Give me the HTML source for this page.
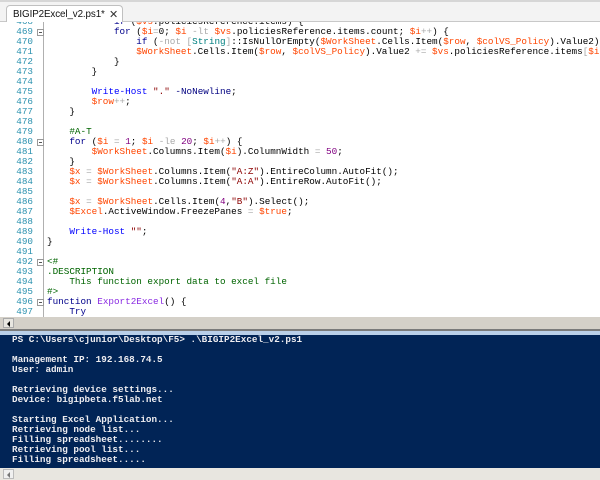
<!DOCTYPE html>
<html><head><meta charset="utf-8"><style>
*{margin:0;padding:0;box-sizing:border-box}
body{width:600px;height:480px;overflow:hidden;background:#fff;position:relative;font-family:"Liberation Mono",monospace}
.top{position:absolute;left:0;top:0;width:600px;height:22px;background:#f3f3f3;border-top:2px solid #d6d6d6;border-bottom:1px solid #c8c8c8}
.tab{position:absolute;left:6px;top:5px;width:117px;height:18px;background:#fff;border:1px solid #c0c0c0;border-bottom:none;border-radius:4px 4px 0 0;font:9.8px "Liberation Sans",sans-serif;letter-spacing:-0.1px;color:#111;padding:3px 0 0 6px;white-space:nowrap}
.tab span{position:absolute;left:102px;top:2px;font-size:11px;color:#333}
.ed{position:absolute;left:0;top:22px;width:600px;height:295px;overflow:hidden;background:#fff}
.rows{position:absolute;left:0;top:-5px}
.r{height:10px;line-height:10px;font-size:9.3px;white-space:pre;position:relative}
.n{position:absolute;left:0;width:33px;text-align:right;color:#2b91af}
.c{position:absolute;left:47px;color:#000}
.g{position:absolute;left:43px;top:0;width:1px;height:300px;background:#b0b0b0}
.f{position:absolute;left:37px;width:7px;height:7px;border:1px solid #999;background:#fff}
.f:after{content:"";position:absolute;left:1px;top:2px;width:3px;height:1px;background:#555}
.v{color:#ff4500}.k{color:#00008b}.cm{color:#0000ff}.s{color:#8b0000}.co{color:#006400}.nu{color:#800080}.o{color:#a9a9a9}.t{color:#008080}.p{color:#000080}.fn{color:#8a2be2}
.sb{position:absolute;left:0;top:317px;width:600px;height:12px;background:#d4d0c8}
.sb i{position:absolute;left:3px;top:1px;width:11px;height:10px;background:#e8e6e0;border:1px solid #aaa}
.sb i:after{content:"";position:absolute;left:3px;top:2px;border:3px solid transparent;border-right:3px solid #000;border-left:0}
.ln1{position:absolute;left:0;top:329px;width:600px;height:2px;background:#7a7a7a}
.ln2{position:absolute;left:0;top:331px;width:600px;height:4px;background:#b9cfe8}
.con{position:absolute;left:0;top:335px;width:600px;height:133px;background:#012456;color:#eeedf0;font-size:9.3px;font-weight:bold}
.con div{height:10px;line-height:10px;white-space:pre;padding-left:12px}
.sb2{position:absolute;left:0;top:468px;width:600px;height:12px;background:#e8e6e0}
.sb2 i{position:absolute;left:3px;top:1px;width:11px;height:10px;background:#f0f0f0;border:1px solid #bbb}
.sb2 i:after{content:"";position:absolute;left:3px;top:2px;border:3px solid transparent;border-right:3px solid #777;border-left:0}
</style></head><body>
<div class="top"></div>
<div class="tab">BIGIP2Excel_v2.ps1*<span>✕</span></div>
<div class="ed">
<div class="g"></div>
<div class="rows">
<div class="r"><span class="n">468</span><span class="c">            <span class="k">if</span> (<span class="v">$vs</span>.policiesReference.items) {</span></div>
<div class="r"><span class="n">469</span><i class="f" style="top:2px"></i><span class="c">            <span class="k">for</span> (<span class="v">$i</span><span class="o">=</span>0; <span class="v">$i</span> <span class="o">-lt</span> <span class="v">$vs</span>.policiesReference.items.count; <span class="v">$i</span><span class="o">++</span>) {</span></div>
<div class="r"><span class="n">470</span><span class="c">                <span class="k">if</span> (<span class="o">-not</span> <span class="o">[</span><span class="t">String</span><span class="o">]</span>::IsNullOrEmpty(<span class="v">$WorkSheet</span>.Cells.Item(<span class="v">$row</span>, <span class="v">$colVS_Policy</span>).Value2)) { <span class="v">$W</span></span></div>
<div class="r"><span class="n">471</span><span class="c">                <span class="v">$WorkSheet</span>.Cells.Item(<span class="v">$row</span>, <span class="v">$colVS_Policy</span>).Value2 <span class="o">+=</span> <span class="v">$vs</span>.policiesReference.items<span class="o">[</span><span class="v">$i</span><span class="o">]</span></span></div>
<div class="r"><span class="n">472</span><span class="c">            }</span></div>
<div class="r"><span class="n">473</span><span class="c">        }</span></div>
<div class="r"><span class="n">474</span><span class="c"></span></div>
<div class="r"><span class="n">475</span><span class="c">        <span class="cm">Write-Host</span> <span class="s">"."</span> <span class="p">-NoNewline</span>;</span></div>
<div class="r"><span class="n">476</span><span class="c">        <span class="v">$row</span><span class="o">++</span>;</span></div>
<div class="r"><span class="n">477</span><span class="c">    }</span></div>
<div class="r"><span class="n">478</span><span class="c"></span></div>
<div class="r"><span class="n">479</span><span class="c">    <span class="co">#A-T</span></span></div>
<div class="r"><span class="n">480</span><i class="f" style="top:2px"></i><span class="c">    <span class="k">for</span> (<span class="v">$i</span> <span class="o">=</span> <span class="nu">1</span>; <span class="v">$i</span> <span class="o">-le</span> <span class="nu">20</span>; <span class="v">$i</span><span class="o">++</span>) {</span></div>
<div class="r"><span class="n">481</span><span class="c">        <span class="v">$WorkSheet</span>.Columns.Item(<span class="v">$i</span>).ColumnWidth <span class="o">=</span> <span class="nu">50</span>;</span></div>
<div class="r"><span class="n">482</span><span class="c">    }</span></div>
<div class="r"><span class="n">483</span><span class="c">    <span class="v">$x</span> <span class="o">=</span> <span class="v">$WorkSheet</span>.Columns.Item(<span class="s">"A:Z"</span>).EntireColumn.AutoFit();</span></div>
<div class="r"><span class="n">484</span><span class="c">    <span class="v">$x</span> <span class="o">=</span> <span class="v">$WorkSheet</span>.Columns.Item(<span class="s">"A:A"</span>).EntireRow.AutoFit();</span></div>
<div class="r"><span class="n">485</span><span class="c"></span></div>
<div class="r"><span class="n">486</span><span class="c">    <span class="v">$x</span> <span class="o">=</span> <span class="v">$WorkSheet</span>.Cells.Item(<span class="nu">4</span>,<span class="s">"B"</span>).Select();</span></div>
<div class="r"><span class="n">487</span><span class="c">    <span class="v">$Excel</span>.ActiveWindow.FreezePanes <span class="o">=</span> <span class="v">$true</span>;</span></div>
<div class="r"><span class="n">488</span><span class="c"></span></div>
<div class="r"><span class="n">489</span><span class="c">    <span class="cm">Write-Host</span> <span class="s">""</span>;</span></div>
<div class="r"><span class="n">490</span><span class="c">}</span></div>
<div class="r"><span class="n">491</span><span class="c"></span></div>
<div class="r"><span class="n">492</span><i class="f" style="top:2px"></i><span class="c"><span class="co">&lt;#</span></span></div>
<div class="r"><span class="n">493</span><span class="c"><span class="co">.DESCRIPTION</span></span></div>
<div class="r"><span class="n">494</span><span class="c"><span class="co">    This function export data to excel file</span></span></div>
<div class="r"><span class="n">495</span><span class="c"><span class="co">#&gt;</span></span></div>
<div class="r"><span class="n">496</span><i class="f" style="top:2px"></i><span class="c"><span class="k">function</span> <span class="fn">Export2Excel</span>() {</span></div>
<div class="r"><span class="n">497</span><span class="c">    <span class="k">Try</span></span></div>
<div class="r"><span class="n">498</span><span class="c">    {</span></div>
</div>
</div>
<div class="sb"><i></i></div>
<div class="ln1"></div><div class="ln2"></div>
<div class="con">
<div>PS C:\Users\cjunior\Desktop\F5&gt; .\BIGIP2Excel_v2.ps1</div>
<div></div>
<div>Management IP: 192.168.74.5</div>
<div>User: admin</div>
<div></div>
<div>Retrieving device settings...</div>
<div>Device: bigipbeta.f5lab.net</div>
<div></div>
<div>Starting Excel Application...</div>
<div>Retrieving node list...</div>
<div>Filling spreadsheet........</div>
<div>Retrieving pool list...</div>
<div>Filling spreadsheet.....</div>
</div>
<div class="sb2"><i></i></div>
</body></html>
